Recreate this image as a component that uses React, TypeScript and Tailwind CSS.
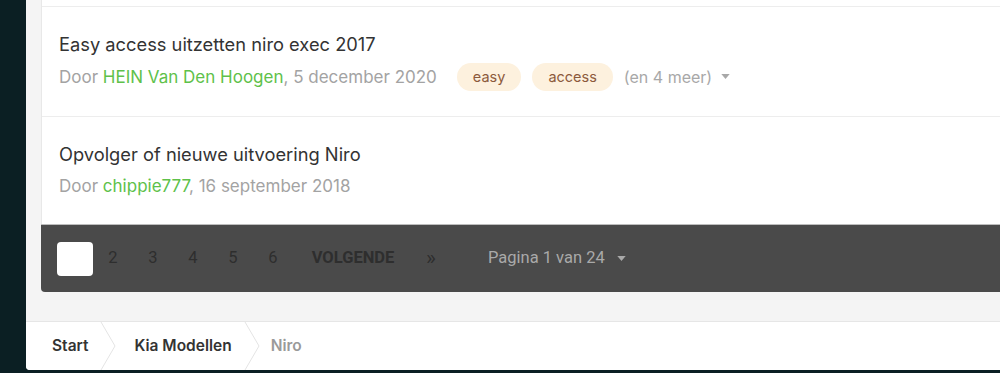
import React from 'react';

const Caret: React.FC<{ className?: string }> = ({ className }) => (
  <svg viewBox="0 0 10 6" className={className} fill="currentColor">
    <path d="M0 0h10L5 6z" />
  </svg>
);

const Chevron: React.FC = () => (
  <svg width="16" height="48" viewBox="0 0 16 48" className="shrink-0">
    <path d="M1 0 L15 24 L1 48" fill="none" stroke="#e4e4e4" strokeWidth="1" />
  </svg>
);

const Tag: React.FC<{ label: string }> = ({ label }) => (
  <span className="inline-flex h-[28px] items-center rounded-full bg-[#fdf1de] px-4 text-[14.5px] text-[#8c5a3c]">
    {label}
  </span>
);

const App: React.FC = () => {
  return (
    <div className="flex h-[373px] w-[1000px] overflow-hidden bg-[#0b1f23] font-['Inter',sans-serif]">
      {/* left dark strip */}
      <div className="w-[26px] shrink-0" />

      <div className="flex h-[370px] flex-1 flex-col overflow-hidden rounded-bl-[4px] bg-[#f4f4f4]">
        {/* topic list card */}
        <div className="ml-[15px] flex flex-col border-l border-[#e8e8e8] bg-white">
          <div className="h-[7px] border-b border-[#ededed]" />

          <div className="flex h-[110px] flex-col justify-center gap-[7px] border-b border-[#ededed] pl-[17px] pb-[1px]">
            <div className="text-[18.3px] leading-[24px] text-[#333]">Easy access uitzetten niro exec 2017</div>
            <div className="flex items-center text-[17px] leading-[24px] text-[#a3a3a3]">
              <span>
                Door <span className="text-[#5ec14a]">HEIN Van Den Hoogen</span>, 5 december 2020
              </span>
              <div className="ml-[20px] flex items-center gap-[11px]">
                <Tag label="easy" />
                <Tag label="access" />
              </div>
              <span className="ml-[11px] flex items-center gap-[9px] text-[16px] text-[#a8a8a8]">
                (en 4 meer)
                <Caret className="h-[5px] w-[9px]" />
              </span>
            </div>
          </div>

          <div className="flex h-[107px] flex-col justify-center gap-[8px] pl-[17px] pb-[2px]">
            <div className="text-[18.3px] leading-[24px] text-[#333]">Opvolger of nieuwe uitvoering Niro</div>
            <div className="text-[17px] leading-[24px] text-[#a3a3a3]">
              Door <span className="text-[#5ec14a]">chippie777</span>, 16 september 2018
            </div>
          </div>
        </div>

        {/* pagination bar */}
        <div className="ml-[15px] flex h-[69px] items-center border-t border-[#bdbdbd] rounded-bl-[4px] bg-[#4a4a4a] pl-[16px] font-['Roboto',sans-serif] text-[16.5px] text-[#2e2e2e]">
          <div className="h-[34px] w-[36px] rounded-[4px] bg-white" />
          {['2', '3', '4', '5', '6'].map((n) => (
            <span key={n} className="w-[40px] text-center">
              {n}
            </span>
          ))}
          <span className="w-[120px] text-center font-bold">VOLGENDE</span>
          <span className="w-[36px] text-center text-[21px] leading-none">»</span>
          <span className="ml-[39px] flex items-center gap-[12px] text-[#a9a9a9]">
            Pagina 1 van 24
            <Caret className="h-[5px] w-[9px]" />
          </span>
        </div>

        <div className="h-[29px]" />

        {/* breadcrumb */}
        <div className="flex h-[49px] items-center border-t border-[#e6e6e6] bg-white pl-[26px] text-[15.5px] font-semibold">
          <span className="text-[#333]">Start</span>
          <span className="ml-[12px]">
            <Chevron />
          </span>
          <span className="ml-[18px] text-[#333]">Kia Modellen</span>
          <span className="ml-[12px]">
            <Chevron />
          </span>
          <span className="ml-[11px] text-[#9a9a9a]">Niro</span>
        </div>
      </div>
    </div>
  );
};

export default App;
